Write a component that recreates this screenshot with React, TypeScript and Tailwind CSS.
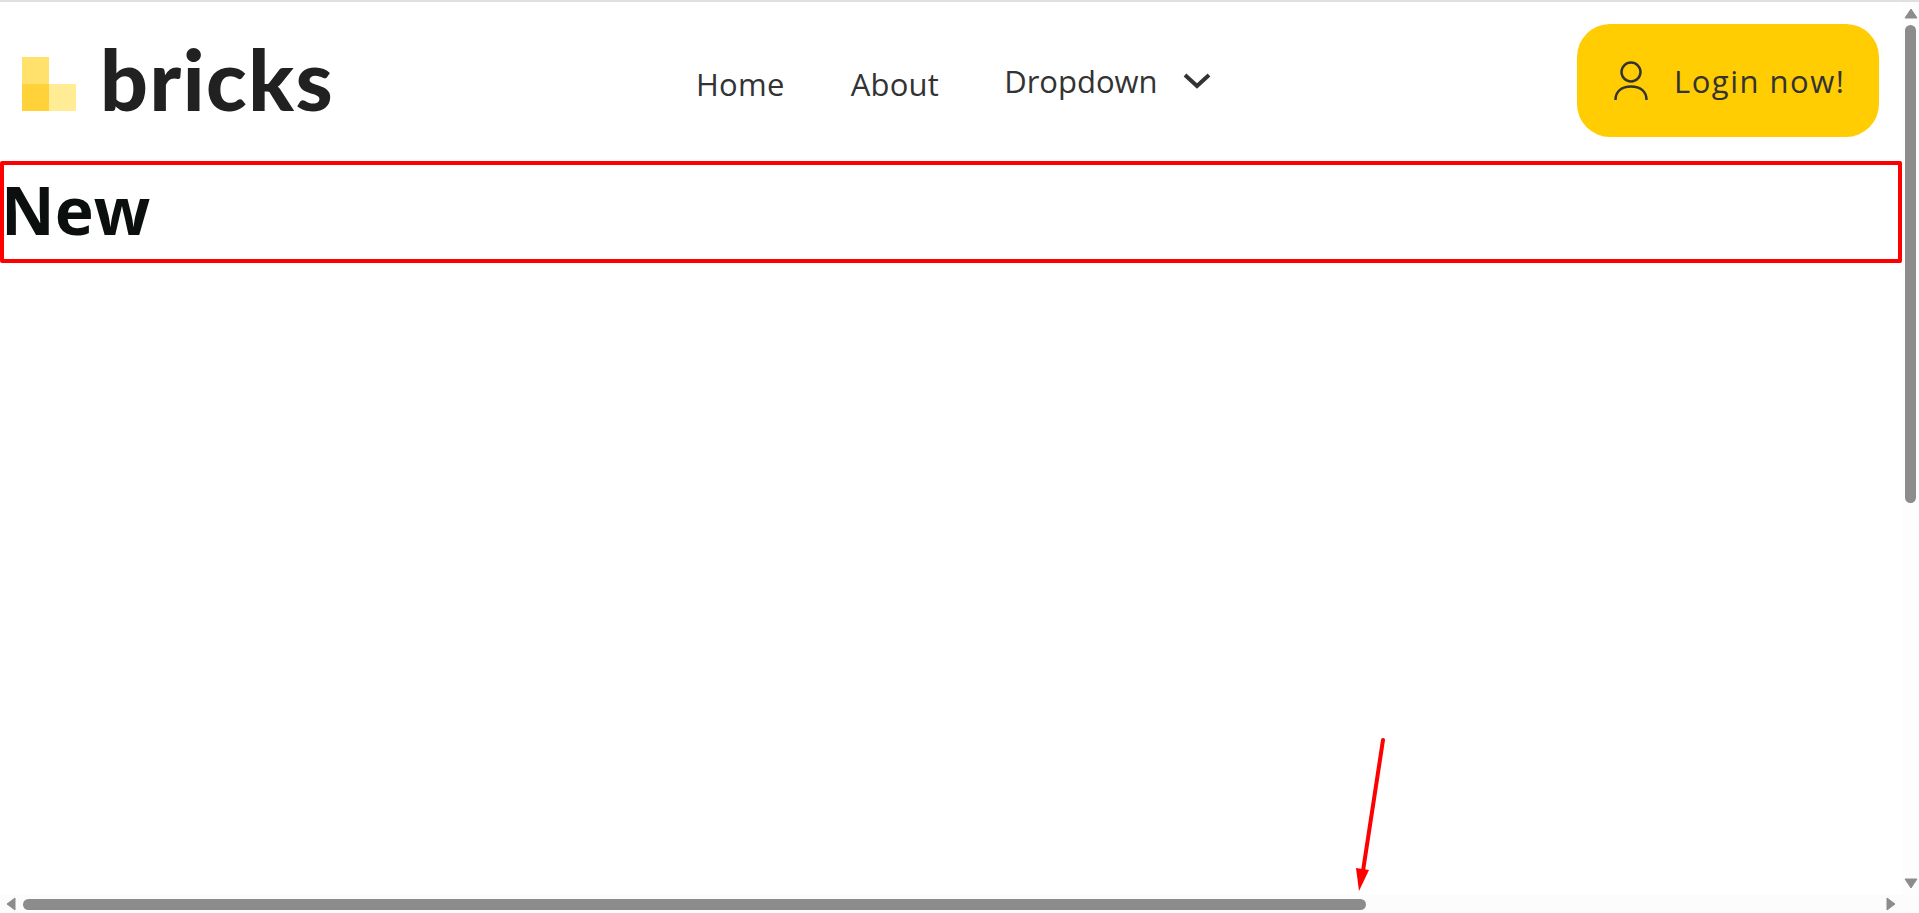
export default function App() {
  return (
    <div className="relative flex h-[913px] w-full flex-col overflow-hidden bg-white font-['Open_Sans',sans-serif]">
      <div className="h-[2px] shrink-0 bg-[#e0e0e0]" />
      <div className="flex min-h-0 flex-1">
        <main className="min-w-0 flex-1">
          <header className="flex h-[159px] items-center pl-[22px] pr-[23px]">
            <div className="flex w-[310px] shrink-0 items-start">
              <svg width="54" height="54" viewBox="0 0 54 54" className="mt-[4px] shrink-0">
                <rect x="0" y="0" width="27" height="27" fill="#ffe16b" />
                <rect x="0" y="27" width="27" height="27" fill="#ffd23a" />
                <rect x="27" y="27" width="27" height="27" fill="#ffec94" />
              </svg>
              <span className="ml-[24px] font-['Lato',sans-serif] text-[84px] font-black leading-[52px] tracking-[1.5px] text-[#212121]">bricks</span>
            </div>
            <nav className="ml-[364px] flex items-center gap-[66px] text-[31px] text-[#333333]">
              <a className="mt-[5px] tracking-[0.25px]">Home</a>
              <a className="mt-[5px] tracking-[0.25px]">About</a>
              <a className="-ml-[1px] flex items-center gap-[25px]">
                Dropdown
                <svg width="28" height="17" viewBox="0 0 28 17" className="-mt-[2px]">
                  <polyline points="2,3 14,14 26,3" fill="none" stroke="#333333" strokeWidth="4" />
                </svg>
              </a>
            </nav>
            <button className="-mt-[2px] ml-auto flex h-[113px] w-[302px] items-center rounded-[33px] bg-[#ffcd02] pl-[37px] text-[31px] text-[#333333]">
              <svg width="34" height="40" viewBox="0 0 34 40" className="shrink-0">
                <circle cx="17" cy="11" r="9.5" fill="none" stroke="#333333" strokeWidth="2.5" />
                <path d="M1.5 39 C1.5 30 8 25.5 17 25.5 C26 25.5 32.5 30 32.5 39" fill="none" stroke="#333333" strokeWidth="2.5" />
              </svg>
              <span className="ml-[26px] mt-[1px] tracking-[1.5px]">Login now!</span>
            </button>
          </header>
          <section className="h-[102px] rounded-[2px] border-4 border-[#ff0000]">
            <h1 className="-ml-[3px] text-[66px] font-bold leading-[88px] text-[#0b0f0e]">New</h1>
          </section>
        </main>
        <aside className="flex w-[17px] shrink-0 flex-col items-center bg-[#fdfdfd] pb-[6px] pt-[6px]">
          <svg width="14" height="11" viewBox="0 0 14 11" className="shrink-0 fill-[#8c8c8c] stroke-[#8c8c8c]" strokeLinejoin="round">
            <path d="M7 1 L13 10 L1 10 Z" />
          </svg>
          <div className="mt-[6px] h-[478px] w-[11px] rounded-full bg-[#8c8c8c]" />
          <svg width="14" height="11" viewBox="0 0 14 11" className="mt-auto shrink-0 fill-[#8c8c8c] stroke-[#8c8c8c]" strokeLinejoin="round">
            <path d="M1 1 L13 1 L7 10 Z" />
          </svg>
        </aside>
      </div>
      <div className="flex h-[18px] shrink-0 items-center bg-[#fcfcfc] pl-[6px] pr-[23px]">
        <svg width="10" height="14" viewBox="0 0 10 14" className="shrink-0 fill-[#8c8c8c] stroke-[#8c8c8c]" strokeLinejoin="round">
          <path d="M9 1 L9 13 L1 7 Z" />
        </svg>
        <div className="ml-[7px] h-[11px] w-[1343px] rounded-full bg-[#8c8c8c]" />
        <svg width="10" height="14" viewBox="0 0 10 14" className="ml-auto shrink-0 fill-[#8c8c8c] stroke-[#8c8c8c]" strokeLinejoin="round">
          <path d="M1 1 L9 7 L1 13 Z" />
        </svg>
      </div>
      <svg width="40" height="170" viewBox="0 0 40 170" className="absolute left-[1350px] top-[737px]">
        <line x1="33" y1="3" x2="13" y2="134" stroke="#ff0000" strokeWidth="4" strokeLinecap="round" />
        <path d="M6 131 L19 133 L9 154 Z" fill="#ff0000" />
      </svg>
    </div>
  );
}
